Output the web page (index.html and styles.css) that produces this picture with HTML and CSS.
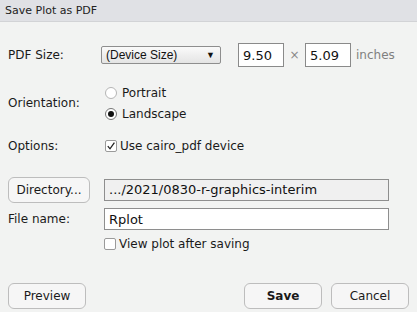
FILE: index.html
```html
<!DOCTYPE html>
<html>
<head>
<meta charset="utf-8">
<title>Save Plot as PDF</title>
<link rel="stylesheet" href="styles.css">
</head>
<body>
  <div class="titlebar">Save Plot as PDF</div>
  <div class="dialog">
    <div class="row size-row">
      <span class="label">PDF Size:</span>
      <div class="select">
        <span>(Device Size)</span>
        <span class="arrow">&#9660;</span>
      </div>
      <input class="num" type="text" value="9.50">
      <span class="times">&times;</span>
      <input class="num" type="text" value="5.09">
      <span class="unit">inches</span>
    </div>

    <div class="row orient-row">
      <span class="label">Orientation:</span>
      <div class="radios">
        <label class="opt"><span class="radio"></span>Portrait</label>
        <label class="opt"><span class="radio on"></span>Landscape</label>
      </div>
    </div>

    <div class="row options-row">
      <span class="label">Options:</span>
      <label class="opt"><span class="check on">
        <svg width="10" height="10" viewBox="0 0 10 10"><path d="M1.8 5.2 L4 7.8 L8.4 1.6" fill="none" stroke="#222" stroke-width="1.3"/></svg>
      </span>Use cairo_pdf device</label>
    </div>

    <div class="row dir-row">
      <button class="btn dir-btn">Directory...</button>
      <div class="field path">.../2021/0830-r-graphics-interim</div>
    </div>

    <div class="row name-row">
      <span class="label">File name:</span>
      <input class="field name" type="text" value="Rplot">
    </div>

    <div class="row view-row">
      <label class="opt"><span class="check"></span>View plot after saving</label>
    </div>

    <div class="footer">
      <button class="btn">Preview</button>
      <div class="spacer"></div>
      <button class="btn save">Save</button>
      <button class="btn">Cancel</button>
    </div>
  </div>
</body>
</html>
```

FILE: styles.css
```css
html, body {
  margin: 0;
  padding: 0;
}
body {
  width: 417px;
  height: 312px;
  background: #f2f3f2;
  font-family: "DejaVu Sans", sans-serif;
  font-size: 12px;
  color: #1a1a1a;
  overflow: hidden;
}
.titlebar {
  height: 21px;
  line-height: 21px;
  padding-left: 5px;
  background: #e0e1e5;
  border-bottom: 1px solid #d2d3d6;
  font-size: 11px;
  color: #222;
}
.dialog {
  padding: 0 8px;
}
.row {
  display: flex;
  align-items: center;
}
.label {
  width: 96px;
  flex: none;
}
.size-row {
  margin-top: 21px;
  height: 24px;
}
.select {
  display: flex;
  align-items: center;
  justify-content: space-between;
  height: 18px;
  margin-left: -3px;
  padding: 0 5px 0 4px;
  box-sizing: border-box;
  width: 120px;
  border: 1px solid #8e8e8e;
  border-radius: 2px;
  background: linear-gradient(#fafafa, #e4e4e4);
  font-family: "Liberation Sans", Arial, sans-serif;
  font-size: 12px;
  color: #111;
}
.arrow {
  font-size: 9px;
}
.num {
  width: 46px;
  height: 24px;
  box-sizing: border-box;
  margin: 0;
  padding: 0 4px;
  border: 1px solid #8a8a8a;
  background: #fff;
  font-family: "DejaVu Sans", sans-serif;
  font-size: 13px;
  color: #111;
  outline: none;
}
.select + .num {
  margin-left: 17px;
}
.times {
  width: 21px;
  text-align: center;
  color: #888;
  font-size: 12px;
}
.unit {
  margin-left: 5px;
  color: #808080;
  font-size: 12px;
}
.orient-row {
  margin-top: 17px;
}
.radios {
  display: flex;
  flex-direction: column;
  gap: 4px;
}
.opt {
  display: flex;
  align-items: center;
  height: 17px;
}
.radio {
  width: 12px;
  height: 12px;
  box-sizing: border-box;
  border: 1px solid #b5b5b5;
  border-radius: 50%;
  background: #fff;
  margin: 0 5px 0 1px;
  position: relative;
}
.radio.on {
  border-color: #777;
}
.radio.on::after {
  content: "";
  position: absolute;
  left: 2px;
  top: 2px;
  width: 6px;
  height: 6px;
  border-radius: 50%;
  background: #111;
}
.check {
  width: 12px;
  height: 12px;
  box-sizing: border-box;
  border: 1px solid #9a9a9a;
  border-radius: 2px;
  background: #fff;
  margin: 0 3px 0 0;
  display: flex;
  align-items: center;
  justify-content: center;
}
.check svg {
  display: block;
}
.options-row {
  margin-top: 15px;
}
.options-row .label {
  width: 97px;
}
.dir-row {
  margin-top: 23px;
}
.btn {
  height: 26px;
  box-sizing: border-box;
  padding: 0 15px;
  border: 1px solid #bdbdbd;
  border-radius: 6px;
  background: #f6f6f6;
  font-family: "DejaVu Sans", sans-serif;
  font-size: 12px;
  color: #1a1a1a;
}
.dir-btn {
  width: 82px;
  padding: 0;
}
.field {
  height: 22px;
  box-sizing: border-box;
  width: 285px;
  margin: 0;
  border: 1px solid #8e8e8e;
  padding: 0 4px;
  font-family: "DejaVu Sans", sans-serif;
  font-size: 13px;
  color: #111;
  outline: none;
}
.path {
  margin-left: 14px;
  background: #f0f0f0;
  line-height: 20px;
}
.name {
  background: #fff;
}
.name-row {
  margin-top: 5px;
}
.view-row {
  margin-top: 5px;
  padding-left: 96px;
}
.footer {
  display: flex;
  align-items: center;
  margin-top: 31px;
  gap: 9px;
}
.footer .btn {
  width: 78px;
  padding: 0;
}
.spacer {
  flex: 1;
}
.save {
  font-weight: bold;
}
```
